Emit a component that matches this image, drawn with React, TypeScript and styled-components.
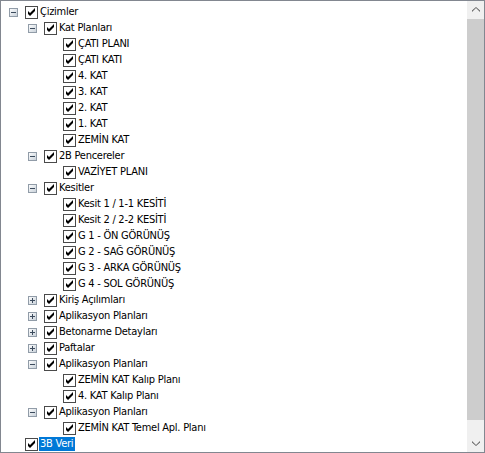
import React from "react";
import styled, { createGlobalStyle } from "styled-components";

const GlobalStyle = createGlobalStyle`
  html, body {
    margin: 0;
    padding: 0;
    background: #ffffff;
  }
`;

interface TreeNode {
  label: string;
  children?: TreeNode[];
  collapsed?: boolean;
  selected?: boolean;
}

const leaf = (label: string): TreeNode => ({ label });
const closed = (label: string): TreeNode => ({ label, children: [], collapsed: true });

const tree: TreeNode[] = [
  {
    label: "Çizimler",
    children: [
      {
        label: "Kat Planları",
        children: ["ÇATI PLANI", "ÇATI KATI", "4. KAT", "3. KAT", "2. KAT", "1. KAT", "ZEMİN KAT"].map(leaf)
      },
      { label: "2B Pencereler", children: [leaf("VAZİYET PLANI")] },
      {
        label: "Kesitler",
        children: [
          "Kesit 1 / 1-1 KESİTİ",
          "Kesit 2 / 2-2 KESİTİ",
          "G 1 - ÖN GÖRÜNÜŞ",
          "G 2 - SAĞ GÖRÜNÜŞ",
          "G 3 - ARKA GÖRÜNÜŞ",
          "G 4 - SOL GÖRÜNÜŞ"
        ].map(leaf)
      },
      closed("Kiriş Açılımları"),
      closed("Aplikasyon Planları"),
      closed("Betonarme Detayları"),
      closed("Paftalar"),
      {
        label: "Aplikasyon Planları",
        children: [leaf("ZEMİN KAT Kalıp Planı"), leaf("4. KAT Kalıp Planı")]
      },
      { label: "Aplikasyon Planları", children: [leaf("ZEMİN KAT Temel Apl. Planı")] }
    ]
  },
  { label: "3B Veri", selected: true }
];

interface Row {
  node: TreeNode;
  level: number;
}

const flatten = (nodes: TreeNode[], level = 0): Row[] =>
  nodes.flatMap(node => [
    { node, level },
    ...(node.children && !node.collapsed ? flatten(node.children, level + 1) : [])
  ]);

const Frame = styled.div`
  width: 485px;
  height: 453px;
  box-sizing: border-box;
  border: 1px solid #828790;
  display: flex;
  overflow: hidden;
  background: #ffffff;
`;

const TreeArea = styled.div`
  flex: 1;
  overflow: hidden;
  padding-top: 3px;
`;

const RowLine = styled.div<{ $level: number }>`
  display: flex;
  align-items: center;
  height: 16px;
  padding-left: ${p => 3 + p.$level * 19}px;
`;

const ExpanderSlot = styled.div`
  width: 21px;
  height: 16px;
  display: flex;
  align-items: center;
  padding-left: 5px;
  box-sizing: border-box;
`;

const CheckSlot = styled.div`
  width: 13px;
  height: 13px;
  display: flex;
`;

const Label = styled.span<{ $selected?: boolean }>`
  margin-left: 1px;
  padding: 0 2px 0 1px;
  height: 14px;
  line-height: 14px;
  font-family: "DejaVu Sans Condensed", "Liberation Sans", sans-serif;
  font-stretch: condensed;
  font-size: 11px;
  letter-spacing: -0.25px;
  white-space: nowrap;
  color: ${p => (p.$selected ? "#ffffff" : "#000000")};
  background: ${p => (p.$selected ? "#0078d7" : "transparent")};
`;

const ScrollBar = styled.div`
  width: 17px;
  display: flex;
  flex-direction: column;
  background: #f0f0f0;
`;

const ArrowButton = styled.div`
  height: 17px;
  display: flex;
  align-items: center;
  justify-content: center;
`;

const Track = styled.div`
  flex: 1;
  display: flex;
  flex-direction: column;
  padding-bottom: 15px;
`;

const Thumb = styled.div`
  flex: 1;
  margin: 1px 0 0;
  background: #cdcdcd;
`;

const Expander = ({ open }: { open: boolean }) => (
  <svg width="9" height="9" viewBox="0 0 9 9">
    <defs>
      <linearGradient id="exp" x1="0" y1="0" x2="1" y2="1">
        <stop offset="0" stopColor="#ffffff" />
        <stop offset="1" stopColor="#c6cfd8" />
      </linearGradient>
    </defs>
    <rect x="0.5" y="0.5" width="8" height="8" fill="url(#exp)" stroke="#919ca8" />
    <rect x="2" y="4" width="5" height="1" fill="#3c4b5d" />
    {!open && <rect x="4" y="2" width="1" height="5" fill="#3c4b5d" />}
  </svg>
);

const CheckBox = () => (
  <svg width="13" height="13" viewBox="0 0 13 13">
    <rect x="0.5" y="0.5" width="12" height="12" fill="#ffffff" stroke="#4a4a4a" />
    <path d="M3 5 L3 8 L5 10 L10 5 L10 2 L5 7 Z" fill="#000000" />
  </svg>
);

const Chevron = ({ down }: { down?: boolean }) => (
  <svg width="8" height="5" viewBox="0 0 8 5">
    <path
      d={down ? "M0 0 L4 4 L8 0 L8 1.6 L4 5 L0 1.6 Z" : "M0 5 L4 1 L8 5 L8 3.4 L4 0 L0 3.4 Z"}
      fill="#606060"
    />
  </svg>
);

export default function App() {
  const rows = flatten(tree);
  return (
    <>
      <GlobalStyle />
      <Frame>
        <TreeArea>
          {rows.map(({ node, level }, i) => (
            <RowLine key={i} $level={level}>
              <ExpanderSlot>
                {node.children && <Expander open={!node.collapsed} />}
              </ExpanderSlot>
              <CheckSlot>
                <CheckBox />
              </CheckSlot>
              <Label $selected={node.selected}>{node.label}</Label>
            </RowLine>
          ))}
        </TreeArea>
        <ScrollBar>
          <ArrowButton>
            <Chevron />
          </ArrowButton>
          <Track>
            <Thumb />
          </Track>
          <ArrowButton>
            <Chevron down />
          </ArrowButton>
        </ScrollBar>
      </Frame>
    </>
  );
}
